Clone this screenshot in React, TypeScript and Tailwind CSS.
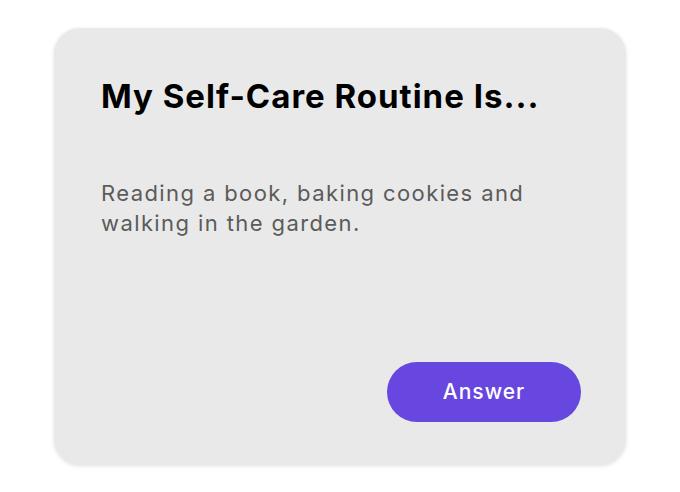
export default function App() {
  return (
    <div className="flex h-[492px] w-full items-center justify-center bg-white font-['Inter',sans-serif]">
      <div className="flex h-[437px] w-[572px] flex-col rounded-[26px] bg-[#e9e9e9] pl-[47px] pr-[45px] pb-[43px] pt-[44px] shadow-[0_1px_4px_rgba(0,0,0,0.12)]">
        <h1 className="text-[33px] font-bold leading-[48px] tracking-[1px] text-black">
          My Self-Care Routine Is...
        </h1>
        <p className="mt-[58px] w-[450px] text-[22px] leading-[30px] tracking-[1.4px] text-[#5b5b5b]">
          Reading a book, baking cookies and walking in the garden.
        </p>
        <div className="mt-auto flex justify-end">
          <button className="h-[60px] w-[194px] rounded-full bg-[#6846e0] text-[21px] font-medium tracking-[1px] text-white">
            Answer
          </button>
        </div>
      </div>
    </div>
  )
}
